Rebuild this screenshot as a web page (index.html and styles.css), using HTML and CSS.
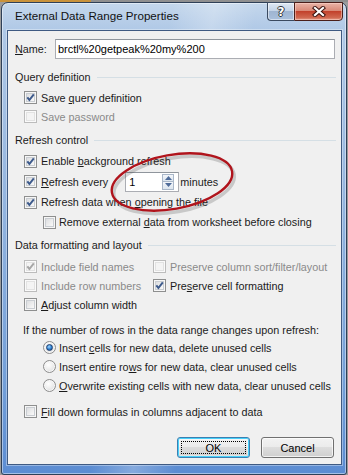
FILE: index.html
```html
<!DOCTYPE html>
<html>
<head>
<meta charset="utf-8">
<link rel="stylesheet" href="styles.css">
</head>
<body>
<div class="strip"></div>
<div class="window">
  <div class="titlebar">
    <span class="title">External Data Range Properties</span>
    <div class="caption-btns">
      <div class="cbtn help"><span class="qmark">?</span></div>
      <div class="cbtn close">
        <svg width="14" height="11" viewBox="0 0 14 11">
          <path d="M3 2 L11 9 M11 2 L3 9" stroke="#3b1410" stroke-width="4.2" stroke-linecap="square"/>
          <path d="M3 2 L11 9 M11 2 L3 9" stroke="#ffffff" stroke-width="2.2" stroke-linecap="square"/>
        </svg>
      </div>
    </div>
  </div>
  <div class="client">
    <div class="name-row">
      <span class="label"><u>N</u>ame:</span>
      <div class="textbox">brctl%20getpeak%20my%200</div>
    </div>

    <div class="group-head gh1"><span>Query definition</span><div class="rule"></div></div>
    <div class="row first-q"><span class="cb"><svg class="tick" viewBox="0 0 11 11"><path d="M2.3 5.4 L4.4 8 L8.8 2.4"/></svg></span><span>Save <u>q</u>uery definition</span></div>
    <div class="row disabled"><span class="cb dis"></span><span>Save password</span></div>

    <div class="group-head gh2"><span>Refresh control</span><div class="rule"></div></div>
    <div class="row r20 first-r"><span class="cb"><svg class="tick" viewBox="0 0 11 11"><path d="M2.3 5.4 L4.4 8 L8.8 2.4"/></svg></span><span>Enable <u>b</u>ackground refresh</span></div>
    <div class="row r21"><span class="cb"><svg class="tick" viewBox="0 0 11 11"><path d="M2.3 5.4 L4.4 8 L8.8 2.4"/></svg></span><span class="every"><u>R</u>efresh every</span>
      <div class="spin"><span class="spin-val">1</span>
        <div class="spin-btns">
          <div class="sb up"><svg width="7" height="4" viewBox="0 0 7 4"><path d="M0 4 L3.5 0 L7 4 Z" fill="#4f6c9a"/></svg></div>
          <div class="sb down"><svg width="7" height="4" viewBox="0 0 7 4"><path d="M0 0 L3.5 4 L7 0 Z" fill="#4f6c9a"/></svg></div>
        </div>
      </div>
      <span class="minutes">minutes</span>
    </div>
    <div class="row r20"><span class="cb"><svg class="tick" viewBox="0 0 11 11"><path d="M2.3 5.4 L4.4 8 L8.8 2.4"/></svg></span><span>Refresh data when <u>o</u>pening the file</span></div>
    <div class="row r20 indent"><span class="cb"></span><span>Remove external <u>d</u>ata from worksheet before closing</span></div>

    <div class="group-head gh3"><span>Data formatting and layout</span><div class="rule"></div></div>
    <div class="grid">
      <div class="row disabled"><span class="cb dis"><svg class="tick grey" viewBox="0 0 11 11"><path d="M2.3 5.4 L4.4 8 L8.8 2.4"/></svg></span><span>Include field names</span></div>
      <div class="row col2 disabled"><span class="cb dis"></span><span>Preserve column sort/filter/layout</span></div>
      <div class="row disabled"><span class="cb dis"></span><span>Include row numbers</span></div>
      <div class="row col2"><span class="cb"><svg class="tick" viewBox="0 0 11 11"><path d="M2.3 5.4 L4.4 8 L8.8 2.4"/></svg></span><span>Pre<u>s</u>erve cell formatting</span></div>
      <div class="row"><span class="cb"></span><span><u>A</u>djust column width</span></div>
    </div>

    <div class="if-row">If the number of rows in the data range changes upon refresh:</div>
    <div class="row indent"><span class="rb on"></span><span>Insert <u>c</u>ells for new data, delete unused cells</span></div>
    <div class="row indent"><span class="rb"></span><span>Insert entire ro<u>w</u>s for new data, clear unused cells</span></div>
    <div class="row indent"><span class="rb"></span><span><u>O</u>verwrite existing cells with new data, clear unused cells</span></div>

    <div class="row fill"><span class="cb"></span><span><u>F</u>ill down formulas in columns adjacent to data</span></div>

    <div class="buttons">
      <div class="btn default"><span>OK</span></div>
      <div class="btn"><span>Cancel</span></div>
    </div>
  </div>
</div>
<svg class="ellipse" width="150" height="80" viewBox="0 0 150 80">
  <ellipse cx="74" cy="40" rx="61" ry="27" transform="rotate(-10 74 40)" fill="none" stroke="rgba(60,60,60,0.22)" stroke-width="3.5"/>
  <ellipse cx="72" cy="37" rx="61" ry="27" transform="rotate(-10 72 37)" fill="none" stroke="#b0141c" stroke-width="2.4"/>
</svg>
</body>
</html>
```
FILE: styles.css
```css
body {
  margin: 0;
  width: 348px;
  height: 475px;
  overflow: hidden;
  position: relative;
  background: #9c9c9c;
  font-family: "Liberation Sans", Arial, sans-serif;
  font-size: 10.8px;
  color: #1b1b1b;
}

.strip {
  height: 2px;
  background: linear-gradient(to right, #c9923a 0, #c9923a 91px, #8f8f8f 91px, #8f8f8f 100%);
}

.window {
  margin-left: 1px;
  width: 346px;
  height: 473px;
  box-sizing: border-box;
  border: 1px solid #2e4058;
  border-radius: 7px 7px 3px 3px;
  background:
    linear-gradient(100deg, rgba(255,255,255,0) 40%, rgba(255,255,255,0.25) 50%, rgba(255,255,255,0) 60%),
    linear-gradient(to bottom, #c4d7ec 0, #afc8e6 28px, #97b7e0 180px, #739fd8 380px, #5b8cd2 100%);
  box-shadow: inset 0 0 0 1px rgba(255,255,255,0.45);
  padding: 0 4px 0 5px;
  display: flex;
  flex-direction: column;
}

.titlebar {
  height: 27px;
  display: flex;
  align-items: flex-start;
}

.title {
  line-height: 26px;
  padding-left: 8px;
  font-size: 11.6px;
  color: #111;
}

.caption-btns {
  margin-left: auto;
  margin-right: -1px;
  margin-top: -1px;
  display: flex;
}

.cbtn {
  height: 19px;
  box-sizing: border-box;
  border: 1px solid #3a4a60;
  display: flex;
  align-items: center;
  justify-content: center;
}

.help {
  width: 27px;
  border-right: none;
  border-radius: 0 0 0 4px;
  background: linear-gradient(to bottom, #dfe8f3 0, #c4d4e7 45%, #9fb5d1 50%, #a9c0dc 100%);
  box-shadow: inset 0 0 0 1px rgba(255,255,255,0.5);
}

.qmark {
  font-family: "DejaVu Sans", sans-serif;
  font-weight: bold;
  font-size: 12px;
  color: #fff;
  text-shadow: 1px 0 0 #333, -1px 0 0 #333, 0 1px 0 #333, 0 -1px 0 #333;
  line-height: 1;
}

.close {
  width: 49px;
  border-color: #4a1f1a;
  border-radius: 0 0 4px 0;
  background: linear-gradient(to bottom, #eab4a7 0, #d98a78 45%, #c2412c 50%, #d0674f 85%, #e39a88 100%);
  box-shadow: inset 0 0 0 1px rgba(255,220,210,0.5);
}

.client {
  height: 435px;
  box-sizing: border-box;
  border: 1px solid #3f5a82;
  background: #f0f0f0;
  padding: 8px 6px 0 7px;
  display: flex;
  flex-direction: column;
  box-shadow: 0 0 0 1px rgba(255,255,255,0.35);
}

u { text-decoration: underline; text-underline-offset: 1px; }

.name-row {
  display: flex;
  align-items: center;
  height: 20px;
}

.label { width: 40px; }

.textbox {
  flex: 1;
  height: 20px;
  box-sizing: border-box;
  border: 1px solid #abadb3;
  border-top-color: #8f959c;
  background: #fff;
  padding-left: 2px;
  line-height: 18px;
  font-size: 11px;
  color: #000;
}

.group-head {
  height: 20px;
  display: flex;
  align-items: center;
}

.gh1 { margin-top: 8px; }
.gh2 { margin-top: 4px; }
.gh3 { margin-top: 3px; }

.rule {
  flex: 1;
  height: 1px;
  background: #d5dfe5;
  margin-left: 6px;
  margin-right: -1px;
}

.row {
  display: flex;
  align-items: center;
  height: 19px;
  padding-left: 9px;
  gap: 4px;
  white-space: nowrap;
}

.r20 { height: 20px; }
.r21 { height: 21px; }
.first-q { margin-top: 1px; }
.first-r { margin-top: 1px; }
.indent { padding-left: 28px; gap: 3px; }
.disabled { color: #8a8a8a; }

.cb {
  width: 13px;
  height: 13px;
  box-sizing: border-box;
  border: 1px solid #8e8f8f;
  background: linear-gradient(135deg, #d4d6d9 0, #f4f4f4 70%, #ffffff 100%);
  box-shadow: inset 0 0 0 1px #f6f6f6, inset 0 0 0 2px #c9cdd2;
  flex: none;
  display: flex;
  align-items: center;
  justify-content: center;
}

.cb.dis {
  border-color: #bcbcbc;
  background: #f4f4f4;
  box-shadow: inset 0 0 0 1px #fafafa, inset 0 0 0 2px #e2e2e2;
}

.tick {
  width: 11px;
  height: 11px;
  fill: none;
  stroke: #3d5a8c;
  stroke-width: 2;
}

.tick.grey { stroke: #a6a6a6; }

.spin {
  margin-left: 13px;
  width: 54px;
  height: 20px;
  box-sizing: border-box;
  border: 1px solid #abadb3;
  border-top-color: #8f959c;
  background: #fff;
  display: flex;
  align-items: center;
  padding: 1px 4px 1px 3px;
}

.spin-val { flex: 1; color: #000; }

.spin-btns {
  width: 12px;
  height: 16px;
  display: flex;
  flex-direction: column;
}

.sb {
  flex: 1;
  box-sizing: border-box;
  border: 1px solid #a9b7c9;
  background: linear-gradient(to bottom, #f3f6fa, #dce5ef);
  display: flex;
  align-items: center;
  justify-content: center;
}

.sb.down { border-top: none; }

.minutes { margin-left: -3px; }

.grid {
  display: grid;
  grid-template-columns: 138px 1fr;
  margin-top: 2px;
}

.col2 { padding-left: 0; }

.if-row {
  margin-top: 8px;
  height: 16px;
  line-height: 16px;
  padding-left: 8px;
  white-space: nowrap;
}

.rb {
  width: 13px;
  height: 13px;
  box-sizing: border-box;
  border-radius: 50%;
  border: 1px solid #8d8d8d;
  background: radial-gradient(circle at 40% 35%, #ffffff 0, #eeeeee 45%, #d0d2d5 100%);
  box-shadow: inset 0 0 0 1px #f7f7f7;
  flex: none;
  display: flex;
  align-items: center;
  justify-content: center;
}

.rb.on::after {
  content: "";
  width: 5px;
  height: 5px;
  border-radius: 50%;
  background: radial-gradient(circle at 40% 35%, #9ed6ff 0, #2f7fd0 55%, #163f78 100%);
  border: 0.5px solid #1d3f70;
}

.fill { margin-top: 7px; }

.buttons {
  margin-top: 16px;
  display: flex;
  justify-content: flex-end;
  gap: 11px;
  padding-right: 1px;
}

.btn {
  width: 73px;
  height: 21px;
  box-sizing: border-box;
  border: 1px solid #707070;
  border-radius: 3px;
  background: linear-gradient(to bottom, #f2f2f2 0, #ebebeb 50%, #dddddd 50%, #cfcfcf 100%);
  box-shadow: inset 0 0 0 1px rgba(255,255,255,0.7);
  display: flex;
  align-items: center;
  justify-content: center;
  color: #000;
  font-size: 11px;
}

.btn.default {
  border-color: #3c7fb1;
  box-shadow: inset 0 0 0 1px #48d1fb, inset 0 0 0 2px rgba(255,255,255,0.4);
  position: relative;
}

.btn.default::after {
  content: "";
  position: absolute;
  left: 3px;
  top: 3px;
  right: 3px;
  bottom: 3px;
  border: 1px dotted #000;
}

.ellipse {
  position: absolute;
  left: 100px;
  top: 145px;
}
```
